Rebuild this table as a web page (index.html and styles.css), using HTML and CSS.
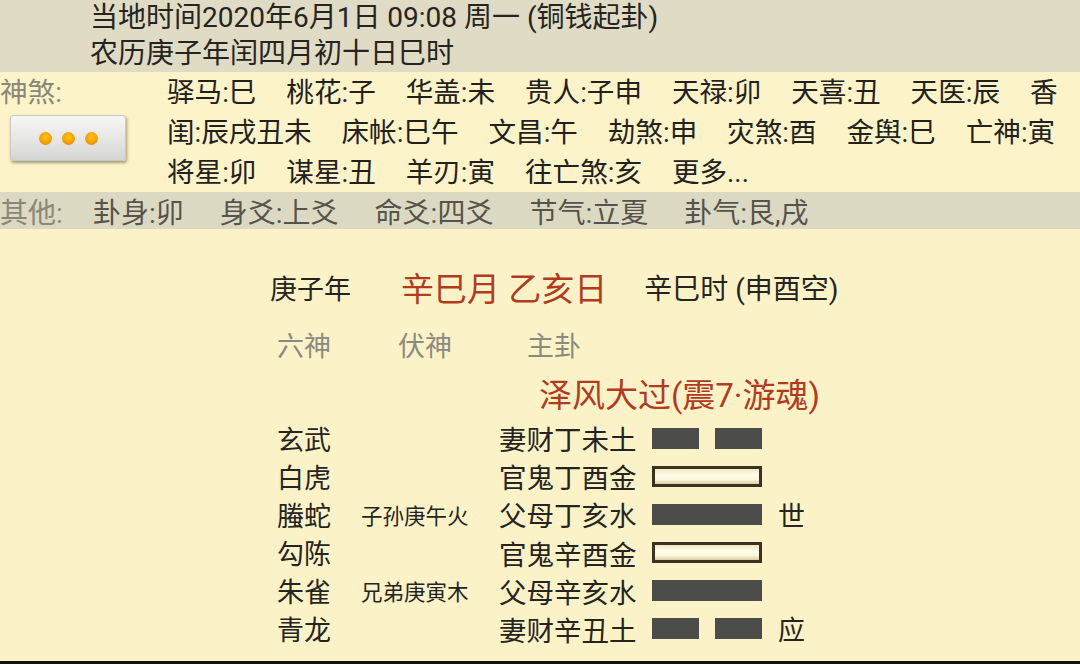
FILE: index.html
```html
<!DOCTYPE html>
<html lang="zh-CN">
<head>
<meta charset="utf-8">
<title>六爻排盘</title>
<link rel="stylesheet" href="styles.css">
</head>
<body>
<div class="page">
  <header class="top">
    <div class="top-line first">当地时间2020年6月1日 09:08 周一 (铜钱起卦)</div>
    <div class="top-line">农历庚子年闰四月初十日巳时</div>
  </header>

  <section class="shensha">
    <div class="side">
      <div class="side-label">神煞:</div>
      <button class="more-btn" type="button"><span class="dot"></span><span class="dot"></span><span class="dot"></span></button>
    </div>
    <div class="ss-text"><span>驿马:巳</span> <span>桃花:子</span> <span>华盖:未</span> <span>贵人:子申</span> <span>天禄:卯</span> <span>天喜:丑</span> <span>天医:辰</span> <span>香闺:辰戌丑未</span> <span>床帐:巳午</span> <span>文昌:午</span> <span>劫煞:申</span> <span>灾煞:酉</span> <span>金舆:巳</span> <span>亡神:寅</span> <span>将星:卯</span> <span>谋星:丑</span> <span>羊刃:寅</span> <span>往亡煞:亥</span> <span>更多...</span></div>
  </section>

  <section class="other">
    <div class="other-label">其他:</div>
    <div class="other-items">
      <span>卦身:卯</span><span>身爻:上爻</span><span>命爻:四爻</span><span>节气:立夏</span><span>卦气:艮,戌</span>
    </div>
  </section>

  <main class="main">
    <div class="pillars">
      <span class="p-year">庚子年</span>
      <span class="p-red">辛巳月 乙亥日</span>
      <span class="p-time">辛巳时 (申酉空)</span>
    </div>
    <div class="heads">
      <span class="h1">六神</span><span class="h2">伏神</span><span class="h3">主卦</span>
    </div>
    <div class="gua-name">泽风大过(震7·游魂)</div>
    <div class="yao-table">
      <div class="yao"><span class="ls">玄武</span><span class="fs"></span><span class="zg">妻财丁未土</span><span class="line yin"><i></i><i></i></span><span class="mark"></span></div>
      <div class="yao"><span class="ls">白虎</span><span class="fs"></span><span class="zg">官鬼丁酉金</span><span class="line yang moving"></span><span class="mark"></span></div>
      <div class="yao"><span class="ls">螣蛇</span><span class="fs">子孙庚午火</span><span class="zg">父母丁亥水</span><span class="line yang"></span><span class="mark">世</span></div>
      <div class="yao"><span class="ls">勾陈</span><span class="fs"></span><span class="zg">官鬼辛酉金</span><span class="line yang moving"></span><span class="mark"></span></div>
      <div class="yao"><span class="ls">朱雀</span><span class="fs">兄弟庚寅木</span><span class="zg">父母辛亥水</span><span class="line yang"></span><span class="mark"></span></div>
      <div class="yao"><span class="ls">青龙</span><span class="fs"></span><span class="zg">妻财辛丑土</span><span class="line yin"><i></i><i></i></span><span class="mark">应</span></div>
    </div>
  </main>
</div>
</body>
</html>
```

FILE: styles.css
```css
html, body {
  margin: 0;
  padding: 0;
}
body {
  font-family: "Roboto", "Noto Sans CJK SC", sans-serif;
  color: #262420;
  background: #fbf3c7;
}
.page {
  width: 1080px;
  height: 664px;
  overflow: hidden;
  display: flex;
  flex-direction: column;
}

/* header */
.top {
  background: #dfdbc4;
  height: 72px;
  padding-left: 90px;
  box-sizing: border-box;
  flex: none;
}
.top-line {
  font-size: 28px;
  line-height: 38px;
  height: 38px;
}
.top-line.first {
  line-height: 35px;
  height: 35px;
}

/* shensha */
.shensha {
  background: #fcf3c8;
  height: 120px;
  box-sizing: border-box;
  padding-top: 1px;
  display: flex;
  flex: none;
}
.side {
  width: 167px;
  flex: none;
  display: flex;
  flex-direction: column;
}
.side-label {
  font-size: 27.6px;
  line-height: 40px;
  height: 40px;
  color: #8a8778;
}
.more-btn {
  margin: 2px 0 0 10px;
  width: 116px;
  height: 46px;
  border: 1px solid #c8c8c4;
  border-radius: 3px;
  background: linear-gradient(#f6f6f4, #e4e4e2 60%, #d4d4d2);
  box-shadow: 1px 2px 3px rgba(60, 50, 20, 0.45);
  display: flex;
  align-items: center;
  justify-content: center;
  gap: 10px;
  padding: 0;
}
.dot {
  width: 13px;
  height: 13px;
  border-radius: 50%;
  background: radial-gradient(circle at 50% 40%, #ffc21a 0, #f7a300 50%, #dc8400 100%);
}
.ss-text {
  width: 910px;
  font-size: 27.6px;
  line-height: 40px;
  word-spacing: 23px;
  color: #23211c;
}

/* other */
.other {
  background: #dcd9c2;
  height: 37px;
  flex: none;
  display: flex;
  align-items: center;
  color: #55534b;
  font-size: 28px;
}
.other-label {
  width: 93px;
  flex: none;
  color: #8a8778;
}
.other-items {
  display: flex;
  gap: 36px;
}

/* main */
.main {
  flex: 1;
  background: #fbf3c7;
  border-bottom: 3px solid #111;
  padding-top: 36px;
  box-sizing: border-box;
}
.pillars {
  display: flex;
  align-items: center;
  padding-left: 270px;
  height: 44px;
  font-size: 27px;
}
.p-red {
  color: #b23b1f;
  font-size: 33px;
  margin-left: 50px;
}
.p-time {
  font-size: 28px;
  margin-left: 37px;
}
.heads {
  display: flex;
  padding-left: 277px;
  margin-top: 18px;
  height: 40px;
  line-height: 40px;
  font-size: 27px;
  color: #8c8a80;
}
.h1 { width: 121px; }
.h2 { width: 129px; }
.gua-name {
  padding-left: 539px;
  margin-top: 6px;
  color: #b23b1f;
  font-size: 33px;
  line-height: 46px;
  height: 45px;
}
.yao-table {
  display: flex;
  flex-direction: column;
}
.yao {
  display: grid;
  grid-template-columns: 84px 138px 153px 126px auto;
  padding-left: 277px;
  height: 38.2px;
  align-items: center;
  font-size: 27px;
}
.zg {
  font-size: 27.5px;
}
.fs {
  font-size: 21.5px;
}
.line {
  width: 110px;
  height: 21px;
  box-sizing: border-box;
  display: flex;
  justify-content: space-between;
}
.yang {
  background: #4c4c4b;
}
.yang.moving {
  border: 3px solid #3b3222;
  background: linear-gradient(#efe6c6, #fffce8 40%, #fbf6dc 70%, #d8cda6);
}
.yin i {
  display: block;
  width: 47px;
  height: 21px;
  background: #4c4c4b;
}
.mark {
  font-size: 27px;
}
```
